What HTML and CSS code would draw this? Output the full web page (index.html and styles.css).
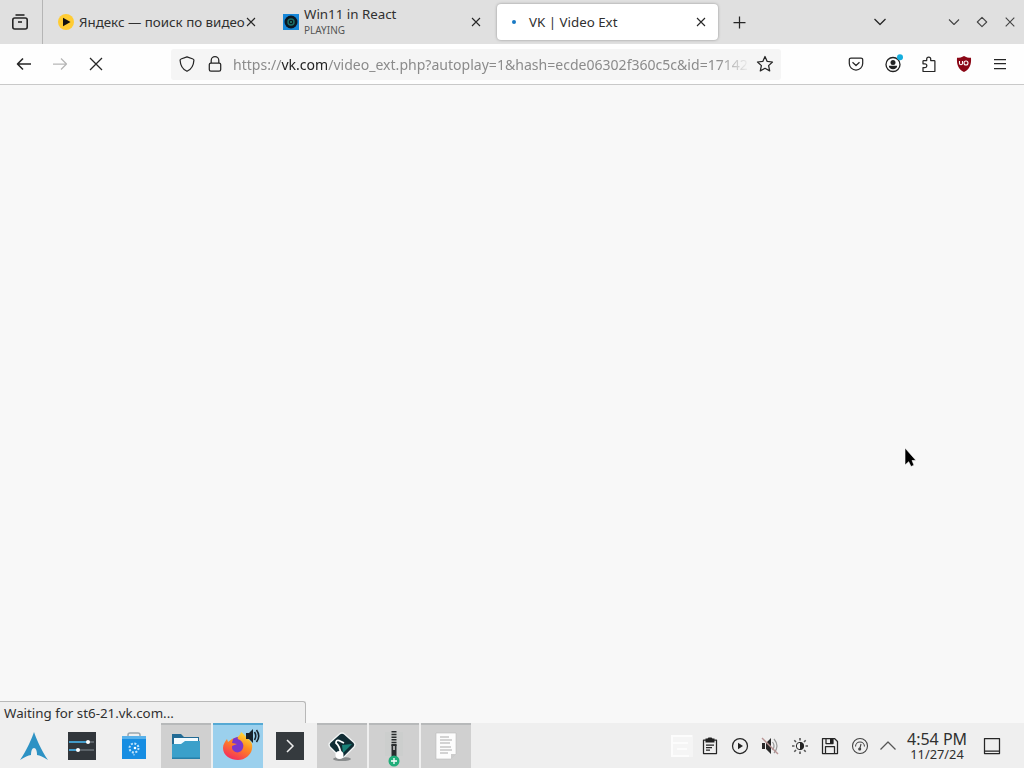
FILE: index.html
```html
<!DOCTYPE html>
<html lang="en">
<head>
  <meta charset="UTF-8" />
  <meta name="viewport" content="width=device-width, initial-scale=1.0" />
  <title>VK | Video Ext</title>
  <link rel="stylesheet" href="styles.css">
</head>
<body>
  <div class="tabbar">
    <div class="view-btn">
      <svg width="16" height="16" viewBox="0 0 16 16" class="line bold"><path d="M3.5 1h9"/><rect x=".8" y="4" width="14.4" height="11" rx="2"/><path d="M6 8h4"/></svg>
    </div>

    <div class="tab">
      <svg width="16" height="16" viewBox="0 0 16 16"><circle cx="8" cy="8" r="8" fill="#fc3"/><path d="M5 3.8v8.4L12.5 8z" fill="#111"/></svg>
      <span class="tab-title">Яндекс — поиск по видео</span>
      <svg width="10" height="10" viewBox="0 0 10 10" class="line close"><path d="M1 1l8 8M9 1l-8 8"/></svg>
    </div>

    <div class="tab">
      <svg width="16" height="16" viewBox="0 0 16 16"><path d="M0 0h16v16H0z" fill="#1687d9"/><circle cx="8" cy="8" r="6.5" fill="#0b1722"/><circle cx="8" cy="8" r="3" fill="none" stroke="#1b6f68" stroke-width="1.5"/><circle cx="8" cy="8" r="1" fill="#238a73"/></svg>
      <span class="tab-title">Win11 in React<small>PLAYING</small></span>
      <svg width="10" height="10" viewBox="0 0 10 10" class="line close"><path d="M1 1l8 8M9 1l-8 8"/></svg>
    </div>

    <div class="tab active">
      <span class="loading"></span>
      <span class="tab-title">VK | Video Ext</span>
      <svg width="10" height="10" viewBox="0 0 10 10" class="line close"><path d="M1 1l8 8M9 1l-8 8"/></svg>
    </div>

    <svg width="13" height="13" viewBox="0 0 13 13" class="line new-tab"><path d="M6.5 .5v12M.5 6.5h12"/></svg>

    <div class="window-btns">
      <svg width="14" height="10" viewBox="0 0 14 10" class="line all-tabs"><path d="M1.5 2L7 7.5 12.5 2"/></svg>
      <svg width="12" height="12" viewBox="0 0 12 12" class="line thin"><path d="M1 3.5l5 5 5-5"/></svg>
      <svg width="12" height="12" viewBox="0 0 12 12" class="line thin"><path d="M6 1.3L10.7 6 6 10.7 1.3 6z"/></svg>
      <svg width="12" height="12" viewBox="0 0 12 12" class="line thin"><path d="M1.7 1.7l8.6 8.6M10.3 1.7l-8.6 8.6"/></svg>
    </div>
  </div>

  <div class="toolbar">
    <div class="nav-btns">
      <svg width="16" height="16" viewBox="0 0 16 16" class="line bold"><path d="M15 8H1.5M7 2.5L1.5 8 7 13.5"/></svg>
      <svg width="16" height="16" viewBox="0 0 16 16" class="line disabled"><path d="M1 8h13.5M9 2.5L14.5 8 9 13.5"/></svg>
      <svg width="16" height="16" viewBox="0 0 16 16" class="line"><path d="M2 2l12 12M14 2L2 14"/></svg>
    </div>

    <div class="urlbar">
      <svg width="16" height="16" viewBox="0 0 16 16" class="line"><path d="M8 .8l6 2.2c.6.2.9.6.9 1.2C14.6 9.5 12 13.5 8 15.3 4 13.5 1.4 9.5 1.1 4.2c0-.6.3-1 .9-1.2z"/></svg>
      <svg width="16" height="16" viewBox="0 0 16 16" class="line"><path d="M4.2 7V4.5a3.8 3.8 0 0 1 7.6 0V7"/><rect x="2.3" y="7" width="11.4" height="8.2" rx="1.6"/></svg>
      <span class="url">https://<b>vk.com</b>/video_ext.php?autoplay=1&amp;hash=ecde06302f360c5c&amp;id=17142</span>
      <svg width="18" height="18" viewBox="0 0 18 18" class="line star"><path d="M9 1.5l2.2 4.9 5.3.6-3.9 3.6 1.1 5.3L9 13.3l-4.700 2.600 1.100-5.300L1.500 7l5.300-.6z"/></svg>
    </div>

    <div class="tools">
      <svg width="16" height="16" viewBox="0 0 16 16" class="line"><path d="M3 2h10a1.700 1.700 0 0 1 1.700 1.700V7.500a6.700 6.500 0 0 1-13.400 0V3.700A1.700 1.700 0 0 1 3 2zM4.500 6.300L8 9.500l3.500-3.200"/></svg>
      <svg width="20" height="20" viewBox="0 0 20 20"><circle cx="10" cy="10.500" r="7" fill="none" stroke="#222" stroke-width="1.300"/><circle cx="10" cy="8.500" r="2.500" fill="#222"/><path d="M5.800 11.800h8.400c0 2-1.900 3.500-4.200 3.500s-4.200-1.500-4.200-3.500z" fill="#222"/><circle cx="17" cy="3.200" r="3" fill="#15aede"/></svg>
      <svg width="16" height="16" viewBox="0 0 16 16" class="line"><path d="M2 7V5.300q0-.8.800-.8H5.700V3a2 2 0 0 1 4 0v1.500h3.400q.8 0 .8.800V14.900q0 .8-.8.800H2.800q-.8 0-.8-.8V11.500h2a1.800 1.800 0 0 0 0-3.700H2z"/></svg>
      <svg width="16" height="16" viewBox="0 0 16 16"><path d="M8 0c2 1.300 4.300 1.800 7 1.800C15.500 9 13.500 13.500 8 16 2.500 13.500.5 9 1 1.800 3.700 1.800 6 1.300 8 0z" fill="#8b0716"/><path d="M3.500 5v2.300c0 1.900 3 1.900 3 0V5" fill="none" stroke="#fff" stroke-width="1.100"/><circle cx="10" cy="7" r="2" fill="none" stroke="#fff" stroke-width="1.100"/></svg>
      <svg width="16" height="16" viewBox="0 0 16 16" class="line"><path d="M2 3.500h12M2 7.500h12M2 12.500h12"/></svg>
    </div>
  </div>

  <div class="page">
    <svg class="cursor" width="14" height="22" viewBox="0 0 14 22"><path d="M1 0v17l3.700-3.300L7 18.500l3-1.300-2-4.700h4z" fill="#000" stroke="#fff" stroke-width=".6"/></svg>
    <div class="status">Waiting for st6-21.vk.com...</div>
  </div>

  <div class="taskbar">
    <div class="launcher">
      <svg width="28" height="28" viewBox="0 0 28 28"><path d="M14 0C12 6 7 18 0 28c5-3 8-4.500 11-5 0-4 1-7 3-7s3 3 3 7c3 .500 6 2 11 5C21 18 16 6 14 0z" fill="#2d92c4"/></svg>
    </div>
    <div class="task">
      <svg width="28" height="28" viewBox="0 0 28 28"><path d="M0 0h28v28H0z" fill="#31363b"/><path d="M1 10h25M1 18h25" stroke="#697178" stroke-width="1.300"/><path d="M1 10h18M1 18h8" stroke="#3daee9" stroke-width="1.300"/><circle cx="20" cy="10" r="2" fill="#fff"/><circle cx="10" cy="18" r="2" fill="#fff"/></svg>
    </div>
    <div class="task">
      <svg width="26" height="28" viewBox="0 0 26 28"><path d="M7 6V3q0-2 2-2h8q2 0 2 2v3" fill="none" stroke="#9ba6ad" stroke-width="1.500"/><path d="M1 4h24v23H1z" fill="#168de2"/><path d="M1 4h24v3H1z" fill="#58b1ea"/><circle cx="13" cy="16" r="4.500" fill="none" stroke="#c1e4fb" stroke-width="2" stroke-dasharray="2 1.500"/><circle cx="14" cy="16" r="1.300" fill="#fff"/><path d="M13 22v1.500" stroke="#c1e4fb"/></svg>
    </div>
    <div class="task open">
      <svg width="30" height="28" viewBox="0 0 30 28"><path d="M1 1h9l3 3h15v10H1z" fill="#216a94"/><path d="M3 5h24v9H3z" fill="#f3fbff"/><path d="M1 11h9l4-3h15v18H1z" fill="#3ba0ca"/><path d="M1 24.500h28V26H1z" fill="#287fa8"/></svg>
    </div>
    <div class="task open current">
      <svg width="30" height="30" viewBox="0 0 30 30">
        <defs><linearGradient id="fox" x1=".8" y1="0" x2=".3" y2="1"><stop offset="0" stop-color="#ffe53b"/><stop offset=".45" stop-color="#ff8b20"/><stop offset="1" stop-color="#f42a5f"/></linearGradient></defs>
        <path d="M18 0c3 2 4 4 6 6 4 3 6 6 5 11-1 6-7 11-14 11S0 24 0 16c0-4 2-6 4-9l1 3 4-3c3-1 8-2 9-7z" fill="url(#fox)"/>
        <path d="M10 7c1-1 3-2 5-2-1 2 0 2 2 3 3 2 4 5 3 8-1 4-6 6-9 3-2-1-2-3-2-5l5-2-5-1z" fill="#7b36cc"/>
      </svg>
      <svg class="sound" width="14" height="14" viewBox="0 0 14 14"><path d="M0 4h3l4-4v14l-4-4H0z" fill="#17212a"/><path d="M8.500 3q2.500 4 0 8M10.500 1q4.500 6 0 12" fill="none" stroke="#17212a" stroke-width="1.600"/></svg>
    </div>
    <div class="task">
      <svg width="28" height="28" viewBox="0 0 28 28"><path d="M0 0h28v28H0z" fill="#353a3e"/><path d="M11 8l6 6-6 6" fill="none" stroke="#eee" stroke-width="1.500"/></svg>
    </div>
    <div class="task open">
      <svg width="28" height="30" viewBox="0 0 28 30"><ellipse cx="14" cy="27" rx="9" ry="2" fill="#898c8d"/><path d="M11.500 2q2.500-2 5 0L26 10.500q2 2 0 4.500l-9.500 9.500q-2.500 2-5 0L2 15q-2-2.500 0-4.500z" fill="#102c34" stroke="#f2f5f5" stroke-width="1.300"/><path d="M14 13l10-1-9 9z" fill="#198178"/><path d="M16 11l-5-2.500Q8 7.500 8 11q4 3 5 12" fill="none" stroke="#fff" stroke-width="1.800"/><circle cx="11.500" cy="23" r="4" fill="#fff"/></svg>
    </div>
    <div class="task open">
      <svg width="28" height="34" viewBox="0 0 28 34"><path d="M5 2h18v24H5z" fill="#cccecd"/><path d="M14 1v15" stroke="#292d2e" stroke-width="5" stroke-dasharray="1.500 1.200"/><path d="M11.500 14h5v13h-5z" fill="#292d2e"/><path d="M13 16h2v4h-2z" fill="#aaa"/><circle cx="14" cy="31" r="5.500" fill="#20ad79"/><path d="M11 31h6M14 28v6" stroke="#fff" stroke-width="1.300"/></svg>
    </div>
    <div class="task open">
      <svg width="24" height="28" viewBox="0 0 24 28"><path d="M2 0h20v21l-5 5H2z" fill="#fcfcfc" stroke="#b8b8b8" stroke-width=".6"/><path d="M6 4h9M6 7h12M6 10h10M6 14h11M6 17h12M6 20h8" stroke="#aaa"/><path d="M17 26v-5h5z" fill="#ccc"/></svg>
    </div>

    <div class="tray">
      <svg width="22" height="22" viewBox="0 0 22 22"><path d="M0 0h22v22H0z" fill="#f5f5f5"/><path d="M21 1H1v20h17M1 8h16M6 14h10" fill="none" stroke="#fcfcfc" stroke-width="2"/></svg>
      <svg width="18" height="18" viewBox="0 0 18 18" class="line"><path d="M2.500 3h13v13.500h-13zM5 8h8M5 10.500h6M5 13h4"/><path d="M4.500 1.500h2l1-1h3l1 1h2v4h-9z" fill="#222" stroke="none"/></svg>
      <svg width="18" height="18" viewBox="0 0 18 18" class="line"><circle cx="9" cy="9" r="7.500"/><path d="M7 5.800v6.400L12 9z" fill="#222" stroke="none"/></svg>
      <svg width="18" height="18" viewBox="0 0 18 18"><path d="M1 6h3v6H1zM5 6l5-5v16l-5-5z" fill="#292929"/><path d="M11.500 5q3 4 0 8M13 2q6 7 0 14" fill="none" stroke="#999" stroke-width="1.200"/><path d="M1 1l16 16" stroke="#b99494" stroke-width="1.400"/></svg>
      <svg width="18" height="18" viewBox="0 0 18 18"><circle cx="9" cy="9" r="3.700" fill="none" stroke="#222"/><path d="M9 5.300a3.700 3.700 0 0 1 0 7.400z" fill="#222"/><path d="M9 1v2.500M9 14.500V17M1 9h2.500M14.500 9H17M3.300 3.300L5 5M13 13l1.700 1.700M3.300 14.700L5 13M13 5l1.700-1.700" stroke="#555" stroke-width="1.600"/></svg>
      <svg width="18" height="18" viewBox="0 0 18 18" class="line"><path d="M1.500 1.500h12l3 3v12h-15zM4.500 16V9.500h9V16M5 1.500v5h7v-5"/><path d="M9 2h3v4H9z" fill="#222" stroke="none"/></svg>
      <svg width="18" height="18" viewBox="0 0 18 18" class="line thin"><circle cx="9" cy="9" r="7.500"/><path d="M4.500 9.500a4.500 4.500 0 0 1 9 0M8.500 13l1.500-6"/><circle cx="8.700" cy="12" r="1"/></svg>
      <svg width="18" height="18" viewBox="0 0 18 18" class="line"><path d="M1.500 12.500L9 5l7.500 7.500" stroke="#555"/></svg>
    </div>
    <div class="clock">
      <div class="time">4:54 PM</div>
      <div class="date">11/27/24</div>
    </div>
    <svg width="18" height="18" viewBox="0 0 18 18" class="line desktop"><path d="M1.500 1.500h15v15h-15zM1.500 14h15"/></svg>
  </div>
</body>
</html>
```
FILE: styles.css
```css
* {
  box-sizing: border-box;
}

body {
  margin: 0;
  height: 100vh;
  display: flex;
  flex-direction: column;
  overflow: hidden;
  font-family: "Noto Sans", sans-serif;
  font-size: 13.33px;
  color: #303030;
  background: #f8f8f8;
}

svg {
  display: block;
  flex-shrink: 0;
}

.line {
  fill: none;
  stroke: #262626;
  stroke-width: 1.25;
  stroke-linejoin: round;
}

.bold {
  stroke-width: 1.6;
}

.thin {
  stroke: #444;
  stroke-width: 1.1;
}

.disabled {
  stroke: #b7b7b7;
}

/* tabs */
.tabbar {
  height: 44px;
  display: flex;
  align-items: center;
  background: #e0e0e0;
}

.view-btn {
  width: 43px;
  height: 44px;
  padding: 14px 0 0 12px;
  border-right: 1px solid #b5b5b5;
  margin-right: 4px;
}

.tab {
  width: 225px;
  height: 36px;
  padding: 0 16px 0 11px;
  display: flex;
  align-items: center;
  gap: 5px;
  white-space: nowrap;
}

.tab-title {
  flex: 1;
  min-width: 0;
  line-height: 16px;
}

.tab-title small {
  display: block;
  font-size: 10px;
  line-height: 16px;
  color: #555;
}

.close {
  stroke-width: 1.1;
}

.tab.active {
  width: 221px;
  padding: 0 12px 0 15px;
  gap: 13px;
  background: #fff;
  border-radius: 4px;
  box-shadow: 0 0 3px rgba(0, 0, 0, 0.35);
}

.loading {
  width: 4px;
  height: 4px;
  border-radius: 50%;
  background: #1879c4;
}

.new-tab {
  margin-left: 15px;
}

.window-btns {
  margin-left: auto;
  margin-right: 8px;
  display: flex;
  align-items: center;
  gap: 16px;
}

.all-tabs {
  margin-right: 45px;
}

/* navigation */
.toolbar {
  height: 41px;
  display: flex;
  align-items: center;
  background: #fefefe;
  border-bottom: 1px solid #c9c9c9;
}

.nav-btns {
  width: 171px;
  padding-left: 16px;
  display: flex;
  gap: 20px;
}

.urlbar {
  width: 610px;
  height: 31px;
  padding: 0 7px 0 8px;
  display: flex;
  align-items: center;
  background: #f5f5f5;
  border-radius: 3px;
}

.urlbar svg + svg {
  margin-left: 12px;
}

.url {
  flex: 1;
  margin: 0 6px 0 10px;
  white-space: nowrap;
  font-size: 14.05px;
  color: #8b8b8b;
  mask-image: linear-gradient(to left, transparent, #000 32px);
}

.url b {
  color: #222;
  font-weight: normal;
}

.tools {
  margin-left: auto;
  margin-right: 16px;
  display: flex;
  align-items: center;
  gap: 18px;
}

.tools svg:last-child {
  margin-left: 2px;
}

.tools svg:first-child {
  margin-right: 1px;
}

.tools svg:nth-child(4) {
  margin-left: 1px;
}

/* page area */
.page {
  flex: 1;
  position: relative;
  display: flex;
  align-items: flex-end;
}

.cursor {
  position: absolute;
  left: 904px;
  top: 363px;
}

.status {
  width: 306px;
  height: 22px;
  padding-left: 4px;
  line-height: 23px;
  background: #efefef;
  border: 1px solid #b8b8b8;
  border-left: 0;
  border-bottom: 0;
  border-radius: 0 3px 0 0;
}

/* taskbar */
.taskbar {
  height: 45px;
  display: flex;
  align-items: center;
  background: #efefef;
}

.launcher {
  width: 56px;
  padding-left: 20px;
}

.task {
  position: relative;
  width: 50px;
  height: 45px;
  margin: 0 1px;
  display: flex;
  align-items: center;
  justify-content: center;
}

.task svg {
  overflow: visible;
}

.task.open {
  background: #d0d0d0;
  border-top: 2px solid #b7b9ba;
}

.task.current {
  background: #9bd0ed;
  border-top-color: #55a9d4;
}

.sound {
  position: absolute;
  right: 3px;
  top: 4px;
}

.tray {
  margin-left: auto;
  display: flex;
  align-items: center;
  gap: 12px;
}

.tray svg:first-child {
  margin-right: -4px;
}

.tray svg:last-child {
  margin-left: -2px;
}

.clock {
  width: 60px;
  margin: 0 16px 0 10px;
  text-align: center;
  white-space: nowrap;
}

.time {
  height: 17px;
  font-size: 16px;
  line-height: 17px;
}

.date {
  height: 12px;
  font-size: 12.8px;
  line-height: 12px;
}

.desktop {
  margin-right: 23px;
}
```
